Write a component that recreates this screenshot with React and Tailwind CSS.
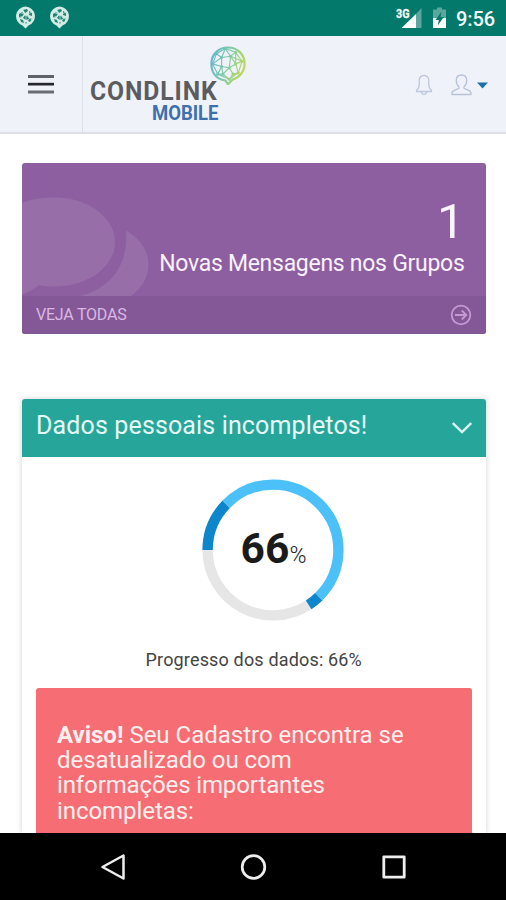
const NODES = [[12, 2], [20, 5], [25, 12], [22, 21], [15, 26], [6, 22], [2, 14], [5, 6], [9, 9], [16, 8], [20, 14], [15, 17], [9, 16], [10, 22], [18, 22]];
const LINKS = [[0, 8], [0, 9], [1, 9], [7, 8], [8, 9], [9, 10], [2, 10], [10, 3], [10, 11], [11, 12], [12, 8], [12, 6], [6, 8], [12, 5], [12, 13], [11, 13], [11, 14], [14, 3], [13, 4], [9, 11], [2, 9], [13, 5], [0, 7], [0, 1], [1, 2], [2, 3], [3, 4], [4, 5], [5, 6], [6, 7], [14, 4], [1, 10]];

function NetworkGlobe() {
  return (
    <svg className="block h-[39px] w-[36px]" viewBox="0 0 28 30.5" fill="none">
      <defs>
        <linearGradient id="globe" gradientUnits="userSpaceOnUse" x1="1" y1="8" x2="27" y2="16">
          <stop offset="0" stopColor="#66b8ca" />
          <stop offset="0.5" stopColor="#7fcba6" />
          <stop offset="1" stopColor="#bcd85a" />
        </linearGradient>
      </defs>
      <path d="M12 27C4.500 26 1 20.500 1 14 1 6.500 6.500 1.200 14 1.200S27 6.500 27 14c0 6-4.500 11-9.500 12.300L14 30z" stroke="url(#globe)" strokeWidth="1.7" />
      {LINKS.map(([a, b], i) => (
        <path key={i} d={`M${NODES[a][0]} ${NODES[a][1]}L${NODES[b][0]} ${NODES[b][1]}`} stroke="url(#globe)" strokeWidth="0.9" />
      ))}
      {NODES.map(([x, y], i) => (
        <circle key={i} cx={x} cy={y} r="1.2" fill="url(#globe)" />
      ))}
    </svg>
  );
}

function StatusGlobe() {
  return (
    <svg className="h-[23px] w-[21px]" viewBox="0 0 21 23">
      <path d="M10.500 .5a9.800 9.800 0 0 1 3 19l-3 3-3-3a9.800 9.800 0 0 1 3-19z" fill="#d5ebe6" />
      <g fill="#1e8575">
        <path d="M8 4l4-1 1 2-3 2zM14 5l3 2v3l-3-1zM4 8l3-2 2 2-2 3-3 1zM10 9l3 1 1 3-3 1-3-2zM5 13l3 1 1 3-3-1zM15 12l2 1-2 3-2-1zM10 16h2l-1 2z" />
      </g>
      <path d="M4 6l7 3 6-3M7 3l4 6v8M3 12l8-3 6 5" stroke="#d5ebe6" strokeWidth=".7" fill="none" />
    </svg>
  );
}

function StatusBar() {
  return (
    <div className="flex h-[35.500px] shrink-0 items-center bg-[#02796b] pl-[15px] pr-[10px]">
      <div className="flex gap-[13px]">
        <StatusGlobe />
        <StatusGlobe />
      </div>
      <svg className="ml-auto h-[24px] w-[27px]" viewBox="0 0 27 24">
        <path d="M5.500 22L20 8v14z" fill="#fff" />
        <path d="M20 8l5.500-6v20H20z" fill="#5ba79d" />
        <text x="0" y="11.500" fontFamily="Roboto" fontWeight="700" fontSize="12" textLength="13.500" lengthAdjust="spacingAndGlyphs" fill="#f4faf9" stroke="#f4faf9" strokeWidth=".3">3G</text>
      </svg>
      <svg className="ml-[9px] h-[22px] w-[15px]" viewBox="0 0 15 22">
        <path d="M1 2.500h4V.5h5v2h4V12H1z" fill="#5ba79d" />
        <path d="M1 11h13v10H1z" fill="#fff" />
        <path d="M9.500 4.500L3.500 13h3.300l-1 5.500 6-8.500H8.500z" fill="#02796b" />
      </svg>
      <span className="ml-[9px] mt-[2px] w-[40px] whitespace-nowrap text-[20px] font-medium leading-[24px] tracking-[-0.1px] text-[#f5fbfa]">9:56</span>
    </div>
  );
}

function Header() {
  return (
    <header className="flex h-[98px] shrink-0 border-b-2 border-[#dddfe7] bg-[#f0f2f9]">
      <div className="w-[83px] border-r border-[#dfe1e9] pl-[28px] pt-[38.500px]">
        <svg className="h-[20px] w-[26px]" viewBox="0 0 26 20">
          <path d="M0 1h26v3H0z" fill="#606269" />
          <path d="M0 8.800h26v2.700H0z" fill="#26272c" />
          <path d="M0 16.500h26v3H0z" fill="#6b6d74" />
        </svg>
      </div>
      <div className="relative w-[165px]">
        <svg className="h-[96px] w-[165px]" viewBox="0 0 165 96">
          <g fontFamily="Roboto" fontWeight="700">
            <text transform="translate(7 64) scale(.95 1)" x="0" y="0" fontSize="26" textLength="133.500" lengthAdjust="spacing" fill="#5b5c60">CONDLINK</text>
            <text transform="translate(69 84.3) scale(.95 1)" x="0" y="0" fontSize="19.500" textLength="70" lengthAdjust="spacing" fill="#3d70ad">MOBILE</text>
          </g>
        </svg>
        <div className="absolute left-[127px] top-[10px]">
          <NetworkGlobe />
        </div>
      </div>
      <div className="ml-auto flex items-start pr-[18px] pt-[38px]">
        <svg className="h-[22px] w-[18px]" viewBox="0 0 18 22" fill="none" stroke="#bcc7dc" strokeWidth="1.300" strokeLinejoin="round">
          <path d="M9 1.500C5.800 1.500 4.200 3.500 4.200 7v3.500c0 3-1 4.500-2.700 5.800v1.200h15v-1.200c-1.700-1.300-2.700-2.800-2.700-5.800V7C13.800 3.500 12.200 1.500 9 1.500zM6.200 17.500c.3 3.800 5.300 3.800 5.600 0" />
        </svg>
        <svg className="ml-[18px] h-[22px] w-[21px]" viewBox="0 0 21 22" fill="none" stroke="#b6c2da" strokeWidth="1.300" strokeLinejoin="round">
          <path d="M10.500 1C7 1 5.300 3.300 5.300 6.500c0 3 1.200 5 2.700 6.300v1.400c-1.200 1.500-6.500 1.800-7 4.300v2h19v-2c-.5-2.500-5.800-2.800-7-4.300v-1.400c1.500-1.300 2.700-3.300 2.700-6.300C15.700 3.300 14 1 10.500 1z" />
        </svg>
        <svg className="ml-[5px] mt-[8px] h-[7px] w-[11px]" viewBox="0 0 11 7">
          <path d="M0 .5h11L5.500 6.500z" fill="#1f6fb0" />
        </svg>
      </div>
    </header>
  );
}

function MessagesCard() {
  return (
    <section className="relative ml-[22px] mr-[20.500px] mt-[29px] flex h-[171px] shrink-0 flex-col overflow-hidden rounded-[3px] bg-[#8e5fa0] text-right">
      <svg className="absolute left-0 top-0 h-[133px] w-[130px]" viewBox="0 0 130 133" fill="#986ea9">
        <path d="M0 40C10 36 21 34.500 33 34.500c33 0 60 20 60 44.500s-27 44.500-60 44.500c-6 0-11-.5-16-1.500-5 4-10 7-17 9.500z" />
        <path d="M104 67.500c14 8 22.500 20 22.500 34 0 12-6 23-18 32H56c28-6 51-27 48-66z" />
      </svg>
      <div className="relative h-[133px] pr-[21px] pt-[34px]">
        <div className="text-[49px] leading-[50px] text-[#faf5fc]">1</div>
        <div className="mt-px whitespace-nowrap text-[23px] leading-[32px] tracking-[-0.280px] text-[#faf1fd]">Novas Mensagens nos Grupos</div>
      </div>
      <div className="relative flex h-[38px] items-center justify-between bg-[#845797] pl-[14px] pr-[13.500px] text-[#d9b9e4]">
        <span className="text-[16px] leading-[20px] tracking-[-0.220px]">VEJA TODAS</span>
        <svg className="mt-[1.500px] h-[22px] w-[22px]" viewBox="0 0 22 22" fill="none" stroke="#c39bd1" strokeWidth="1.800">
          <circle cx="11" cy="11" r="9.300" />
          <path d="M5 11h11M11.800 6.500L16.300 11l-4.500 4.500" />
        </svg>
      </div>
    </section>
  );
}

const CENTER = 71;
const RADIUS = 65.4;

// Point on the ring; degrees run clockwise from the right-hand side.
function pointAt(deg) {
  const rad = (deg * Math.PI) / 180;
  return `${CENTER + RADIUS * Math.cos(rad)} ${CENTER + RADIUS * Math.sin(rad)}`;
}

function Arc({ from, to, color }) {
  return (
    <path d={`M${pointAt(from)}A${RADIUS} ${RADIUS} 0 ${to - from > 180 ? 1 : 0} 1 ${pointAt(to)}`} stroke={color} strokeWidth="10.400" fill="none" />
  );
}

function ProgressRing() {
  return (
    <div className="relative ml-[180px] mt-[22px] h-[142px] w-[142px]">
      <svg className="h-[142px] w-[142px]" viewBox="0 0 142 142">
        <Arc from={57} to={180} color="#e6e6e6" />
        <Arc from={180} to={224.4} color="#0d86cc" />
        <Arc from={224.4} to={405.6} color="#4cc0f8" />
        <Arc from={45.6} to={57} color="#0d86cc" />
      </svg>
      <div className="absolute inset-0 flex items-baseline justify-center pl-px pt-[44.500px]">
        <span className="text-[42.500px] font-bold leading-[50px] text-[#1a1a1a]">66</span>
        <span className="text-[23px] font-light text-[#222]">%</span>
      </div>
    </div>
  );
}

function DataPanel() {
  return (
    <section className="ml-[22px] mr-[20.500px] mt-[65px] flex min-h-0 flex-1 flex-col rounded-t-[3px] shadow-[0_0_5px_1px_rgba(0,0,0,0.13)]">
      <div className="flex h-[58.500px] shrink-0 items-start justify-between rounded-t-[3px] bg-[#26a69a] pl-[14px] pr-[14px] pt-[11px]">
        <h2 className="whitespace-nowrap text-[25px] leading-[32px] tracking-[0.140px] text-[#e6faf8]">Dados pessoais incompletos!</h2>
        <svg className="mt-[12px] h-[12px] w-[20px]" viewBox="0 0 20 12" fill="none" stroke="#d8f5f1" strokeWidth="2.400">
          <path d="M.8 1L10 10l9.200-9" />
        </svg>
      </div>
      <div className="flex min-h-0 flex-1 flex-col bg-white">
        <ProgressRing />
        <p className="mt-[27px] whitespace-nowrap text-center text-[18px] leading-[24px] tracking-[0.160px] text-[#444]">Progresso dos dados: 66%</p>
        <div className="mx-[14px] mt-[16px] min-h-0 flex-1 overflow-hidden rounded-t-[3px] bg-[#f66d74] pl-[21px] pt-[34.500px] text-[24px] leading-[25.400px] tracking-[-0.060px] text-[#fff0ee]">
          <div className="whitespace-nowrap tracking-[0px]"><b>Aviso!</b> Seu Cadastro encontra se</div>
          <div className="whitespace-nowrap">desatualizado ou com</div>
          <div className="whitespace-nowrap tracking-[-0.120px]">informações importantes</div>
          <div className="whitespace-nowrap">incompletas:</div>
        </div>
      </div>
    </section>
  );
}

function NavBar() {
  return (
    <nav className="relative flex h-[67px] shrink-0 items-center bg-black pl-[100px]">
      <svg className="h-[28px] w-[26px]" viewBox="0 0 26 28" fill="none" stroke="#eee" strokeWidth="2.500" strokeLinejoin="round">
        <path d="M23.500 2.500v23L2.500 14z" />
      </svg>
      <svg className="ml-[114px] h-[28px] w-[28px]" viewBox="0 0 28 28" fill="none" stroke="#eee" strokeWidth="2.700">
        <circle cx="13.500" cy="14" r="11.300" />
      </svg>
      <svg className="ml-[113px] h-[26px] w-[26px]" viewBox="0 0 26 26" fill="none" stroke="#eee" strokeWidth="2.800" strokeLinejoin="round">
        <path d="M2.800 2.800h20.400v20.400H2.800z" />
      </svg>
    </nav>
  );
}

export default function App() {
  return (
    <div className="flex h-[900px] w-[506px] flex-col overflow-hidden bg-white font-['Roboto',sans-serif]">
      <StatusBar />
      <Header />
      <MessagesCard />
      <DataPanel />
      <NavBar />
    </div>
  );
}
